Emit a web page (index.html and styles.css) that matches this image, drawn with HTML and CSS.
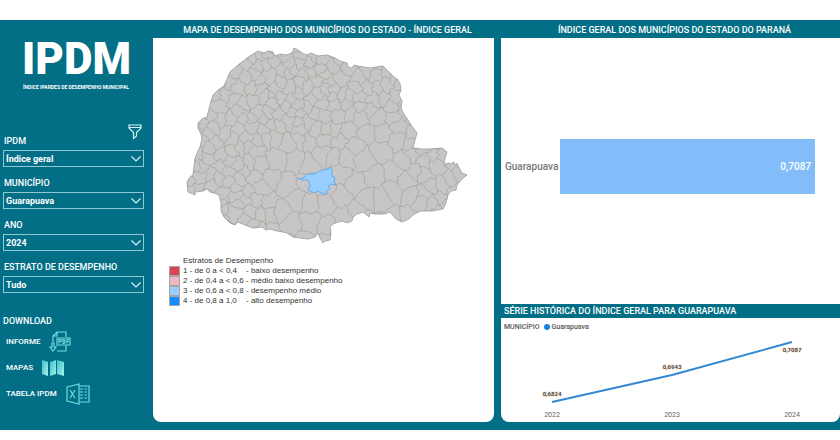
FILE: index.html
```html
<!DOCTYPE html>
<html lang="pt-BR">
<head>
<meta charset="utf-8">
<meta name="viewport" content="width=device-width, initial-scale=1">
<title>IPDM - Índice Ipardes de Desempenho Municipal</title>
<link rel="stylesheet" href="styles.css">
</head>
<body>
<div class="dashboard">
  <aside class="sidebar">
    <header class="brand">
      <h1 class="brand-name">IPDM</h1>
      <p class="brand-tagline">ÍNDICE IPARDES DE DESEMPENHO MUNICIPAL</p>
    </header>
    <form class="filters">
      <button class="filter-button" type="button" aria-label="Filtros">
        <svg viewBox="0 0 14 16" width="14" height="16"><path d="M1 1H13V4L8.500 8.500V12L5.500 14.500V8.500L1 4ZM1 3.500H13"/></svg>
      </button>
      <div class="field">
        <label for="indice">IPDM</label>
        <div class="select"><select id="indice"><option>Índice geral</option></select><svg viewBox="0 0 10 6"><path d="M.5 .5 5 5 9.500 .5"/></svg></div>
      </div>
      <div class="field">
        <label for="municipio">MUNICÍPIO</label>
        <div class="select"><select id="municipio"><option>Guarapuava</option></select><svg viewBox="0 0 10 6"><path d="M.5 .5 5 5 9.500 .5"/></svg></div>
      </div>
      <div class="field">
        <label for="ano">ANO</label>
        <div class="select"><select id="ano"><option>2024</option></select><svg viewBox="0 0 10 6"><path d="M.5 .5 5 5 9.500 .5"/></svg></div>
      </div>
      <div class="field">
        <label for="estrato">ESTRATO DE DESEMPENHO</label>
        <div class="select"><select id="estrato"><option>Tudo</option></select><svg viewBox="0 0 10 6"><path d="M.5 .5 5 5 9.500 .5"/></svg></div>
      </div>
    </form>
    <nav class="downloads">
      <h2>DOWNLOAD</h2>
      <a href="#informe">INFORME
        <svg viewBox="0 0 22 22" width="22" height="22" class="line-icon"><path d="M4 11V5L8 1H17V6M8 1V5H4M17 14V20H8M8 7H21V14H8ZM10 12.500V8.500H12V10.500H10M14 8.500V12.500H15L16 11.500V9.500L15 8.500ZM18 12.500V8.500H20M18 10.500H20M3 12H5V16H7L4 20 1 16H3Z"/></svg>
      </a>
      <a href="#mapas">MAPAS
        <svg viewBox="0 0 22 18" width="22" height="18">
          <defs><linearGradient id="fold" x1="0" y1="0" x2="1" y2="1"><stop offset="0" stop-color="#3bbfc8"/><stop offset="1" stop-color="#a5f3ee"/></linearGradient></defs>
          <g fill="url(#fold)"><path d="M0 1 6 3V17L0 15Z"/><path d="M8 3 14 1V15L8 17Z"/><path d="M15 1 22 3V17L15 15Z"/></g>
        </svg>
      </a>
      <a href="#tabela">TABELA IPDM
        <svg viewBox="0 0 24 22" width="24" height="22" class="line-icon"><path d="M1 4 13 1V21L1 18ZM4 7 9 15M9 7 4 15M13 3H23V19H13M14 6H17M18.500 6H21M14 9H17M18.500 9H21M14 12H17M18.500 12H21M14 15H17M18.500 15H21"/></svg>
      </a>
    </nav>
  </aside>

  <main class="map-column">
    <h2 class="panel-title">MAPA DE DESEMPENHO DOS MUNICÍPIOS DO ESTADO - ÍNDICE GERAL</h2>
    <section class="panel map-panel">
      <svg class="map" viewBox="153 38 341 215" role="img" aria-label="Mapa do Paraná com Guarapuava em destaque">
        <defs><clipPath id="state-clip"><use href="#state"/></clipPath></defs>
        <path id="state" class="state" d="M188 192 187 182 190 177 193 175 195 158 198 151 200 147 202 139 201 134 198 128 198 123 202 119 207 117 210 105 213 95 218 90 224 86 227 79 230 72 238 65 247 58 253 54 258 51 264 53 268 51 273 52 275 56 280 54 286 55 292 53 294 48 298 50 302 53 307 55 311 53 318 56 327 55 335 58 340 61 347 63 348 67 352 68 354 65 358 66 364 67 370 68 376 67 383 66 388 71 392 75 398 80 400 84 401 90 399 95 402 101 401 108 404 114 408 120 411 125 417 133 415 140 413 148 421 149 430 149 442 148 447 152 445 158 444 165 448 163 451 164 454 162 455 165 457 163 459 168 462 173 467 175 461 180 457 185 456 190 451 191 448 195 446 203 443 209 432 211 420 211 413 215 409 219 402 222 396 219 390 212 384 214 375 214 370 213 369 217 363 212 357 214 353 217 352 221 347 223 342 221 338 222 333 224 330 227 331 233 330 240 325 241 323 243 320 238 318 233 315 237 308 239 300 238 293 237 287 233 283 232 277 231 270 229 266 230 262 227 253 228 245 225 238 222 235 225 230 223 224 217 221 211 221 203 219 195 214 193 210 192 207 189 203 191 195 192 195 195Z"/>
        <path id="borders" class="borders" clip-path="url(#state-clip)"/>
        <path class="selected" d="M297 178 302 179 305 176 308 174 314 174 320 171 328 169 331 167 332 171 332 176 335 178 334 181 336 185 332 184 328 186 330 189 326 191 327 194 321 193 318 191 314 193 308 190 310 185 308 180 303 180Z"/>
      </svg>
      <div class="map-legend">
        <h3>Estratos de Desempenho</h3>
        <ul>
          <li><i class="swatch low"></i><span>1 - de 0 a &lt; 0,4</span><span>- baixo desempenho</span></li>
          <li><i class="swatch mid-low"></i><span>2 - de 0,4 a &lt; 0,6</span><span>- médio baixo desempenho</span></li>
          <li><i class="swatch mid"></i><span>3 - de 0,6 a &lt; 0,8</span><span>- desempenho médio</span></li>
          <li><i class="swatch high"></i><span>4 - de 0,8 a 1,0</span><span>- alto desempenho</span></li>
        </ul>
      </div>
    </section>
  </main>

  <div class="chart-column">
    <h2 class="panel-title">ÍNDICE GERAL DOS MUNICÍPIOS DO ESTADO DO PARANÁ</h2>
    <section class="panel bar-panel">
      <span class="bar-label">Guarapuava</span>
      <div class="bar-track"><div class="bar">0,7087</div></div>
    </section>
    <h2 class="panel-title series-title">SÉRIE HISTÓRICA DO ÍNDICE GERAL PARA GUARAPUAVA</h2>
    <section class="panel series-panel">
      <p class="series-legend"><b>MUNICÍPIO</b><i class="dot"></i><span>Guarapuava</span></p>
      <svg class="series" viewBox="0 0 339 88" role="img" aria-label="Série histórica de Guarapuava">
        <path class="series-line" d="M51 69 171 42 291 9"/>
        <g class="values"><text x="51" y="63">0,6824</text><text x="171" y="36">0,6943</text><text x="291" y="19">0,7087</text></g>
        <g class="years"><text x="51" y="84">2022</text><text x="171" y="84">2023</text><text x="291" y="84">2024</text></g>
      </svg>
    </section>
  </div>
</div>
<script src="map.js"></script>
</body>
</html>
```

FILE: styles.css
```css
* { box-sizing: border-box; }

:root {
  --teal: #026f86;
  --outline: #8cc9d4;
}

body {
  margin: 0;
  padding: 20px 0 10px;
  background: #fff;
  font-family: Roboto, "Liberation Sans", sans-serif;
  font-size: 9px;
  line-height: 12px;
}

h1, h2, h3, p, ul { margin: 0; padding: 0; font-size: inherit; font-weight: 500; }

.dashboard {
  display: grid;
  grid-template-columns: 153px minmax(0, 341fr) minmax(0, 346fr);
  min-height: 410px;
  background: var(--teal);
  color: #fff;
}

.sidebar { display: flex; flex-direction: column; }

.brand { padding: 14px 0 0 22px; }

.brand-name {
  font-size: 44px;
  font-weight: 900;
  line-height: 50px;
}

.brand-tagline {
  padding-left: 1px;
  font-size: 5px;
  font-weight: 700;
  line-height: 6px;
  white-space: nowrap;
}

.filters {
  position: relative;
  display: flex;
  flex-direction: column;
  gap: 10px;
  margin-top: 45px;
  padding: 0 9px 0 3px;
}

.filter-button {
  position: absolute;
  top: -11px;
  right: 11px;
  padding: 0;
  border: 0;
  background: none;
  line-height: 0;
}

.filter-button path, .select path { fill: none; stroke: #d5f3f6; stroke-width: 1.2; }

.field label { display: block; margin-bottom: 3px; padding-left: 1px; font-weight: 500; }

.select { display: grid; align-items: center; }

.select select {
  grid-area: 1 / 1;
  width: 100%;
  height: 17px;
  padding: 0 2px;
  border: 1px solid var(--outline);
  border-radius: 0;
  appearance: none;
  background: none;
  color: #fff;
  font: 700 9px/12px Roboto, "Liberation Sans", sans-serif;
}

.select svg { grid-area: 1 / 1; justify-self: end; width: 10px; height: 6px; margin-right: 3px; pointer-events: none; }

.downloads { display: flex; flex-direction: column; gap: 4px; padding: 22px 0 0 3px; }

.downloads a {
  display: flex;
  align-items: center;
  gap: 9px;
  height: 22px;
  padding-left: 3px;
  color: #fff;
  font-size: 8px;
  font-weight: 500;
  text-decoration: none;
}

.line-icon { fill: none; stroke: #72dbe0; stroke-width: 1.2; }

.map-column, .chart-column { display: flex; flex-direction: column; padding-bottom: 8px; }

.chart-column { padding-left: 7px; }

.panel-title { padding: 4px 0 2px 8px; text-align: center; white-space: nowrap; }

.panel { background: #fff; }

.map-panel { flex: 1; border-radius: 0 0 8px 8px; }

.map { display: block; width: 100%; }

.state { fill: #c8c6c4; stroke: #aaa9a7; stroke-width: 1; }
.borders { fill: none; stroke: #959493; stroke-width: 0.5; }
.selected { fill: #99ceff; stroke: #64acef; stroke-width: 1; }

.map-legend {
  padding: 3px 0 0 16px;
  color: #333;
  font-family: "Liberation Sans", sans-serif;
  font-size: 8px;
  line-height: 10px;
  white-space: nowrap;
}

.map-legend h3 { padding-left: 14px; font-weight: 400; }
.map-legend ul { list-style: none; }
.map-legend li { display: grid; grid-template-columns: 11px 60px auto; column-gap: 3px; }
.swatch { border: 1px solid #a8a4a8; }
.low { background: #d64550; }
.mid-low { background: #eeb5c3; }
.mid { background: #99ceff; }
.high { background: #118dff; }

.bar-panel { display: flex; align-items: center; height: 266px; padding: 0 25px 9px 4px; font-size: 10px; }
.bar-label { width: 55px; color: #777; font-weight: 500; }
.bar-track { flex: 1; }
.bar { height: 55px; padding-right: 4px; background: #82bdf9; font-weight: 500; line-height: 55px; text-align: right; }

.series-title { padding: 1px 3px; text-align: left; }

.series-panel { flex: 1; padding: 3px 0 0; border-radius: 0 0 8px 8px; color: #555; }
.series-legend { display: flex; align-items: center; padding-left: 3px; font-size: 7px; }
.series-legend b { margin-right: 5px; font-weight: 500; }
.dot { width: 6px; height: 6px; margin-right: 1px; border-radius: 50%; background: #1683e2; }
.series { display: block; width: 100%; }
.series-line { fill: none; stroke: #3389d2; stroke-width: 2; }
.series text { fill: #666; font-size: 7px; text-anchor: middle; }
.series .values text { fill: #4d4544; stroke: #fdf1e4; stroke-width: 2; paint-order: stroke; font-size: 6px; font-weight: 700; }
```

FILE: map.js
```js
// Draws the municipal borders as a cell mesh whose density follows the regions of the state.
(function () {
  var seed = 41;
  function random() {
    seed = (seed * 1664525 + 1013904223) % 4294967296;
    return seed / 4294967296;
  }

  // Typical distance between neighbouring municipal seats.
  function spacing(x, y) {
    if (y < 118) return x < 240 || x > 345 ? 10 : 8;
    if (x < 270 && y > 185) return 9;
    if (x < 260) return 9.5;
    if (y < 140 && x < 340) return 10;
    if (x > 410) return 11;
    return 16;
  }

  var sites = [];
  for (var i = 0; i < 4000; i++) {
    var x = 183 + random() * 289, y = 44 + random() * 203, r = spacing(x, y) * (0.75 + random() * 0.7);
    var free = sites.every(function (s) { return Math.hypot((s[0] - x) * 1.2, s[1] - y) > r; });
    if (free) sites.push([x, y]);
  }

  function clip(poly, a, b) {
    var mx = (a[0] + b[0]) / 2, my = (a[1] + b[1]) / 2, dx = b[0] - a[0], dy = b[1] - a[1], out = [];
    function side(p) { return (p[0] - mx) * dx + (p[1] - my) * dy; }
    poly.forEach(function (p, k) {
      var q = poly[(k + 1) % poly.length], sp = side(p), sq = side(q);
      if (sp <= 0) out.push(p);
      if (sp * sq < 0) {
        var t = sp / (sp - sq);
        out.push([p[0] + t * (q[0] - p[0]), p[1] + t * (q[1] - p[1])]);
      }
    });
    return out;
  }

  // Shifts every point by the same smooth field, so shared borders stay shared.
  function bend(p) {
    var x = p[0], y = p[1];
    return (x + 1.5 * Math.sin(y * 0.7 + x * 0.3)).toFixed(1) + " " +
      (y + 1.5 * Math.sin(x * 0.6 - y * 0.4)).toFixed(1);
  }

  var d = "";
  sites.forEach(function (s) {
    var cell = [[s[0] - 30, s[1] - 30], [s[0] + 30, s[1] - 30], [s[0] + 30, s[1] + 30], [s[0] - 30, s[1] + 30]];
    sites.forEach(function (o) {
      if (o !== s && Math.hypot(o[0] - s[0], o[1] - s[1]) < 50) cell = clip(cell, s, o);
    });
    cell.forEach(function (p, k) {
      var q = cell[(k + 1) % cell.length];
      if (p[0] > q[0]) return;
      d += "M" + bend(p);
      for (var n = 1; n <= 3; n++) d += "L" + bend([p[0] + (q[0] - p[0]) * n / 3, p[1] + (q[1] - p[1]) * n / 3]);
    });
  });
  document.getElementById("borders").setAttribute("d", d);
})();
```
